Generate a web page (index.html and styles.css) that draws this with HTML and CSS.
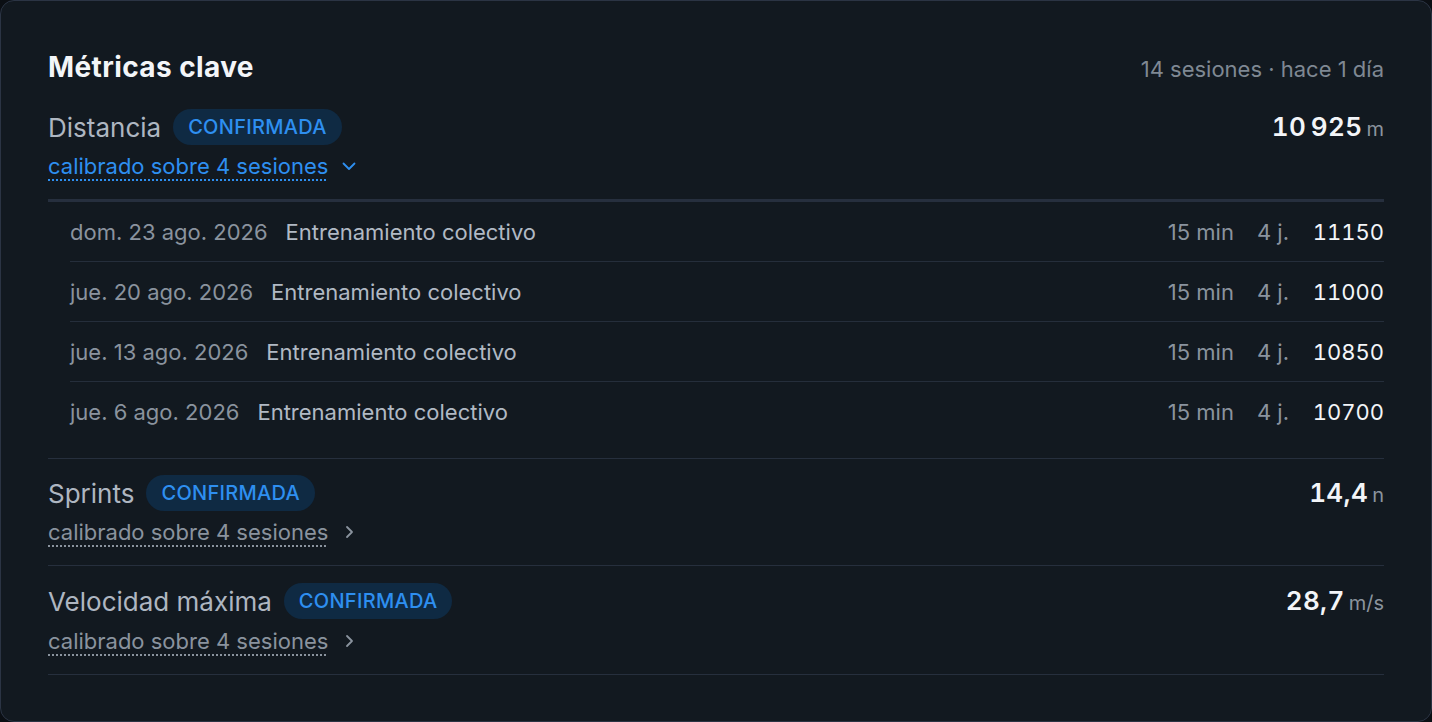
FILE: index.html
```html
<!DOCTYPE html>
<html lang="es">
<head>
<meta charset="utf-8">
<title>Métricas clave</title>
<link rel="stylesheet" href="styles.css">
</head>
<body>
<section class="card">
  <header class="card-head">
    <h2 class="title">Métricas clave</h2>
    <span class="meta">14 sesiones · hace 1 día</span>
  </header>

  <div class="metric">
    <div class="metric-main">
      <div class="metric-left">
        <div class="label-row">
          <span class="label">Distancia</span>
          <span class="badge">CONFIRMADA</span>
        </div>
        <div class="calib open">
          <span class="calib-text">calibrado sobre 4 sesiones</span>
          <svg class="chev" viewBox="0 0 16 16" width="16" height="16"><path d="M2.5 5.5 L8 11 L13.5 5.5" fill="none" stroke="currentColor" stroke-width="1.8" stroke-linecap="round" stroke-linejoin="round"/></svg>
        </div>
      </div>
      <div class="value"><span class="num">10&#8201;925</span><span class="unit">m</span></div>
    </div>
    <div class="sessions">
      <div class="session">
        <span class="date">dom. 23 ago. 2026</span>
        <span class="name">Entrenamiento colectivo</span>
        <span class="dur">15 min</span>
        <span class="players">4 j.</span>
        <span class="sval">11150</span>
      </div>
      <div class="session">
        <span class="date">jue. 20 ago. 2026</span>
        <span class="name">Entrenamiento colectivo</span>
        <span class="dur">15 min</span>
        <span class="players">4 j.</span>
        <span class="sval">11000</span>
      </div>
      <div class="session">
        <span class="date">jue. 13 ago. 2026</span>
        <span class="name">Entrenamiento colectivo</span>
        <span class="dur">15 min</span>
        <span class="players">4 j.</span>
        <span class="sval">10850</span>
      </div>
      <div class="session">
        <span class="date">jue. 6 ago. 2026</span>
        <span class="name">Entrenamiento colectivo</span>
        <span class="dur">15 min</span>
        <span class="players">4 j.</span>
        <span class="sval">10700</span>
      </div>
    </div>
  </div>

  <div class="metric">
    <div class="metric-main">
      <div class="metric-left">
        <div class="label-row">
          <span class="label">Sprints</span>
          <span class="badge">CONFIRMADA</span>
        </div>
        <div class="calib">
          <span class="calib-text">calibrado sobre 4 sesiones</span>
          <svg class="chev" viewBox="0 0 16 16" width="16" height="16"><path d="M6 3 L11 8 L6 13" fill="none" stroke="currentColor" stroke-width="1.8" stroke-linecap="round" stroke-linejoin="round"/></svg>
        </div>
      </div>
      <div class="value"><span class="num">14,4</span><span class="unit">n</span></div>
    </div>
  </div>

  <div class="metric">
    <div class="metric-main">
      <div class="metric-left">
        <div class="label-row">
          <span class="label">Velocidad máxima</span>
          <span class="badge">CONFIRMADA</span>
        </div>
        <div class="calib">
          <span class="calib-text">calibrado sobre 4 sesiones</span>
          <svg class="chev" viewBox="0 0 16 16" width="16" height="16"><path d="M6 3 L11 8 L6 13" fill="none" stroke="currentColor" stroke-width="1.8" stroke-linecap="round" stroke-linejoin="round"/></svg>
        </div>
      </div>
      <div class="value"><span class="num">28,7</span><span class="unit">m/s</span></div>
    </div>
  </div>
</section>
</body>
</html>
```

FILE: styles.css
```css
* { box-sizing: border-box; }

html, body {
  margin: 0;
  padding: 0;
  background: #0b0f14;
}

body {
  font-family: Inter, "Noto Sans", "Liberation Sans", sans-serif;
  color: #e6eaef;
}

.card {
  width: 1432px;
  height: 722px;
  background: #121920;
  border: 1px solid #2b3444;
  border-radius: 14px;
  padding: 0 47px;
  overflow: hidden;
}

.card-head {
  display: flex;
  justify-content: space-between;
  align-items: baseline;
  padding-top: 50px;
  height: 92px;
}

.title {
  margin: 0;
  font-size: 28px;
  line-height: 32px;
  font-weight: 700;
  color: #f3f5f8;
  letter-spacing: 0.4px;
}

.meta {
  font-size: 22px;
  line-height: 30px;
  color: #7f8893;
}

.metric {
  border-bottom: 1px solid #262f3d;
}

.metric-main {
  display: flex;
  justify-content: space-between;
  align-items: flex-start;
  padding: 16px 0 18px;
}

.metric:last-child .metric-main {
  padding-top: 17px;
  padding-bottom: 18px;
}

.metric:last-child .calib {
  margin-top: 8px;
}

.label-row {
  display: flex;
  align-items: center;
  gap: 12px;
  height: 36px;
}

.label {
  font-size: 26px;
  color: #aeb6c1;
}

.badge {
  display: inline-flex;
  align-items: center;
  height: 36px;
  padding: 0 15px;
  border-radius: 18px;
  background: #0f2a43;
  color: #2e8ff0;
  font-size: 20px;
  font-weight: 500;
  letter-spacing: 0.3px;
}

.calib {
  display: flex;
  align-items: center;
  gap: 13px;
  margin-top: 7px;
  height: 28px;
  margin-bottom: 1px;
  color: #8a939e;
}

.calib.open { color: #2e8ff0; }

.calib-text {
  font-size: 22px;
  line-height: 28px;
  text-decoration: underline dotted;
  text-decoration-thickness: 2px;
  text-underline-offset: 5px;
}

.chev { display: block; }

.value {
  display: flex;
  align-items: baseline;
  gap: 4px;
  height: 36px;
  line-height: 36px;
}

.num {
  font-size: 26px;
  font-weight: 600;
  color: #f3f5f8;
  font-variant-numeric: tabular-nums;
  letter-spacing: 0.4px;
}

.unit {
  font-size: 20px;
  color: #8b949e;
}

.sessions {
  border-top: 3px solid #262f3e;
  padding: 0 0 16px 22px;
}

.session {
  display: flex;
  align-items: center;
  height: 60px;
  font-size: 22px;
  border-bottom: 1px solid #252e3b;
}

.session:last-child { border-bottom: none; }

.date {
  color: #8a939e;
  margin-right: 18px;
}

.name {
  color: #b1b9c4;
  flex: 1;
}

.dur {
  color: #8a939e;
  margin-right: 23px;
}

.players {
  color: #8a939e;
  margin-right: 22px;
}

.sval {
  color: #f3f5f8;
  min-width: 73px;
  text-align: right;
  font-variant-numeric: tabular-nums;
}
```
